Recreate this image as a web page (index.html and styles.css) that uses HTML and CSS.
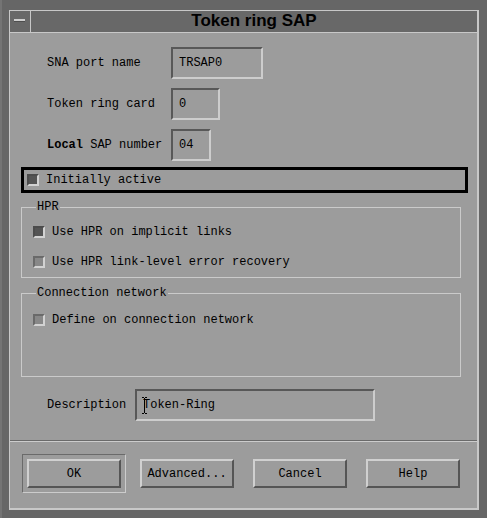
FILE: index.html
```html
<!DOCTYPE html>
<html>
<head>
<meta charset="utf-8">
<link rel="stylesheet" href="styles.css">
</head>
<body>
<div class="window">
  <div class="titlebar">
    <div class="minbtn"><span class="minglyph"></span></div>
    <div class="title">Token ring SAP</div>
  </div>
  <div class="client">
    <div class="fields">
      <div class="label">SNA port name</div>
      <div class="field w88">TRSAP0</div>
      <div class="label">Token ring card</div>
      <div class="field w45">0</div>
      <div class="label"><b>Local</b> SAP number</div>
      <div class="field w36">04</div>
    </div>

    <div class="focusbox">
      <span class="check on"></span><span>Initially active</span>
    </div>

    <fieldset class="group hpr">
      <legend>HPR</legend>
      <div class="row"><span class="check on"></span><span>Use HPR on implicit links</span></div>
      <div class="row"><span class="check off"></span><span>Use HPR link-level error recovery</span></div>
    </fieldset>

    <fieldset class="group conn">
      <legend>Connection network</legend>
      <div class="row"><span class="check off"></span><span>Define on connection network</span></div>
    </fieldset>

    <div class="descrow">
      <div class="label desc">Description</div>
      <div class="field w240"><svg class="ibeam" width="5" height="17" viewBox="0 0 5 17"><path d="M0 0.5H2M3 0.5H5M2.5 1V16M0 16.5H2M3 16.5H5" stroke="#000" stroke-width="1" fill="none"/></svg>Token-Ring</div>
    </div>

    <div class="separator"></div>

    <div class="buttons">
      <div class="default"><div class="btn">OK</div></div>
      <div class="btn">Advanced...</div>
      <div class="btn">Cancel</div>
      <div class="btn">Help</div>
    </div>
  </div>
</div>
</body>
</html>
```
FILE: styles.css
```css
html, body {
  margin: 0;
  padding: 0;
}
body {
  width: 487px;
  height: 518px;
  overflow: hidden;
  background: #666666;
  font-family: "Liberation Mono", "DejaVu Sans Mono", monospace;
  font-size: 12px;
  color: #000;
  box-shadow: inset 2px 0 0 #747474;
}
.window {
  margin: 0 0 0 9px;
  position: relative;
  top: 10px;
  width: 467px;
  border-top: 1px solid #c8c8c8;
  border-left: 1px solid #c8c8c8;
  border-right: 2px solid #c8c8c8;
  border-bottom: 2px solid #c8c8c8;
}
.titlebar {
  display: flex;
  height: 21px;
  background: #686868;
  border-bottom: 1px solid #c8c8c8;
}
.minbtn {
  width: 21px;
  border-right: 1px solid #c8c8c8;
  display: flex;
  justify-content: center;
  align-items: flex-start;
  padding-top: 8px;
  box-sizing: border-box;
}
.minglyph {
  display: block;
  width: 11px;
  height: 2px;
  background: #cfcfcf;
  border-bottom: 1px solid #4e4e4e;
  margin-left: -1px;
}
.title {
  flex: 1;
  text-align: center;
  font-family: "Liberation Sans", Arial, sans-serif;
  font-weight: bold;
  font-size: 17px;
  line-height: 19px;
  color: #000;
}
.client {
  background: #9c9c9c;
  height: 475px;
  display: flex;
  flex-direction: column;
}
.fields {
  display: grid;
  grid-template-columns: 124px auto;
  row-gap: 9px;
  padding: 14px 0 0 37px;
  align-items: center;
}
.label {
  line-height: 14px;
  white-space: nowrap;
}
.label b {
  font-weight: bold;
}
.field {
  height: 28px;
  box-sizing: content-box;
  border-top: 2px solid #585858;
  border-left: 2px solid #585858;
  border-bottom: 2px solid #cdcdcd;
  border-right: 2px solid #cdcdcd;
  padding: 0 0 0 6px;
  line-height: 28px;
  position: relative;
  white-space: nowrap;
}
.w88 { width: 82px; }
.w45 { width: 39px; }
.w36 { width: 30px; }
.w240 { width: 230px; padding-left: 6px; }

.focusbox {
  margin: 6px 0 0 11px;
  width: 438px;
  height: 20px;
  border: 3px solid #000;
  display: flex;
  align-items: center;
  padding-left: 3px;
  line-height: 14px;
}
.check {
  display: inline-block;
  width: 8px;
  height: 8px;
  border-top: 2px solid #4c4c4c;
  border-left: 2px solid #4c4c4c;
  border-bottom: 2px solid #d2d2d2;
  border-right: 2px solid #d2d2d2;
  margin-right: 7px;
  flex: none;
}
.check.on {
  background: #545454;
}
.check.off {
  background: #888888;
  border-top-color: #6a6a6a;
  border-left-color: #6a6a6a;
}
.group {
  margin: 7px 0 0 11px;
  width: 440px;
  box-sizing: border-box;
  border: 1px solid #cacaca;
  padding: 8px 0 5px 11px;
  min-width: 0;
}
.group legend {
  padding: 0 1px;
  margin-left: 3px;
  line-height: 14px;
}
.row {
  display: flex;
  align-items: center;
  height: 20px;
  line-height: 14px;
  white-space: nowrap;
}
.row + .row {
  margin-top: 10px;
}
.conn {
  margin-top: 8px;
  padding-top: 10px;
  padding-bottom: 46px;
}
.descrow {
  display: flex;
  align-items: center;
  margin: 12px 0 0 37px;
}
.desc {
  width: 88px;
}
.ibeam {
  position: absolute;
  left: 5px;
  top: 6px;
}
.separator {
  margin-top: 19px;
  border-top: 1px solid #6a6a6a;
  border-bottom: 1px solid #cccccc;
}
.buttons {
  display: flex;
  align-items: center;
  padding: 12px 0 0 12px;
}
.default {
  padding: 4px;
  border-top: 1px solid #6a6a6a;
  border-left: 1px solid #6a6a6a;
  border-bottom: 1px solid #cccccc;
  border-right: 1px solid #cccccc;
}
.btn {
  width: 90px;
  height: 25px;
  border-top: 2px solid #d0d0d0;
  border-left: 2px solid #d0d0d0;
  border-bottom: 2px solid #555555;
  border-right: 2px solid #555555;
  display: flex;
  align-items: center;
  justify-content: center;
  line-height: 14px;
  white-space: nowrap;
}
.default + .btn {
  margin-left: 14px;
}
.btn + .btn {
  margin-left: 19px;
}
```
